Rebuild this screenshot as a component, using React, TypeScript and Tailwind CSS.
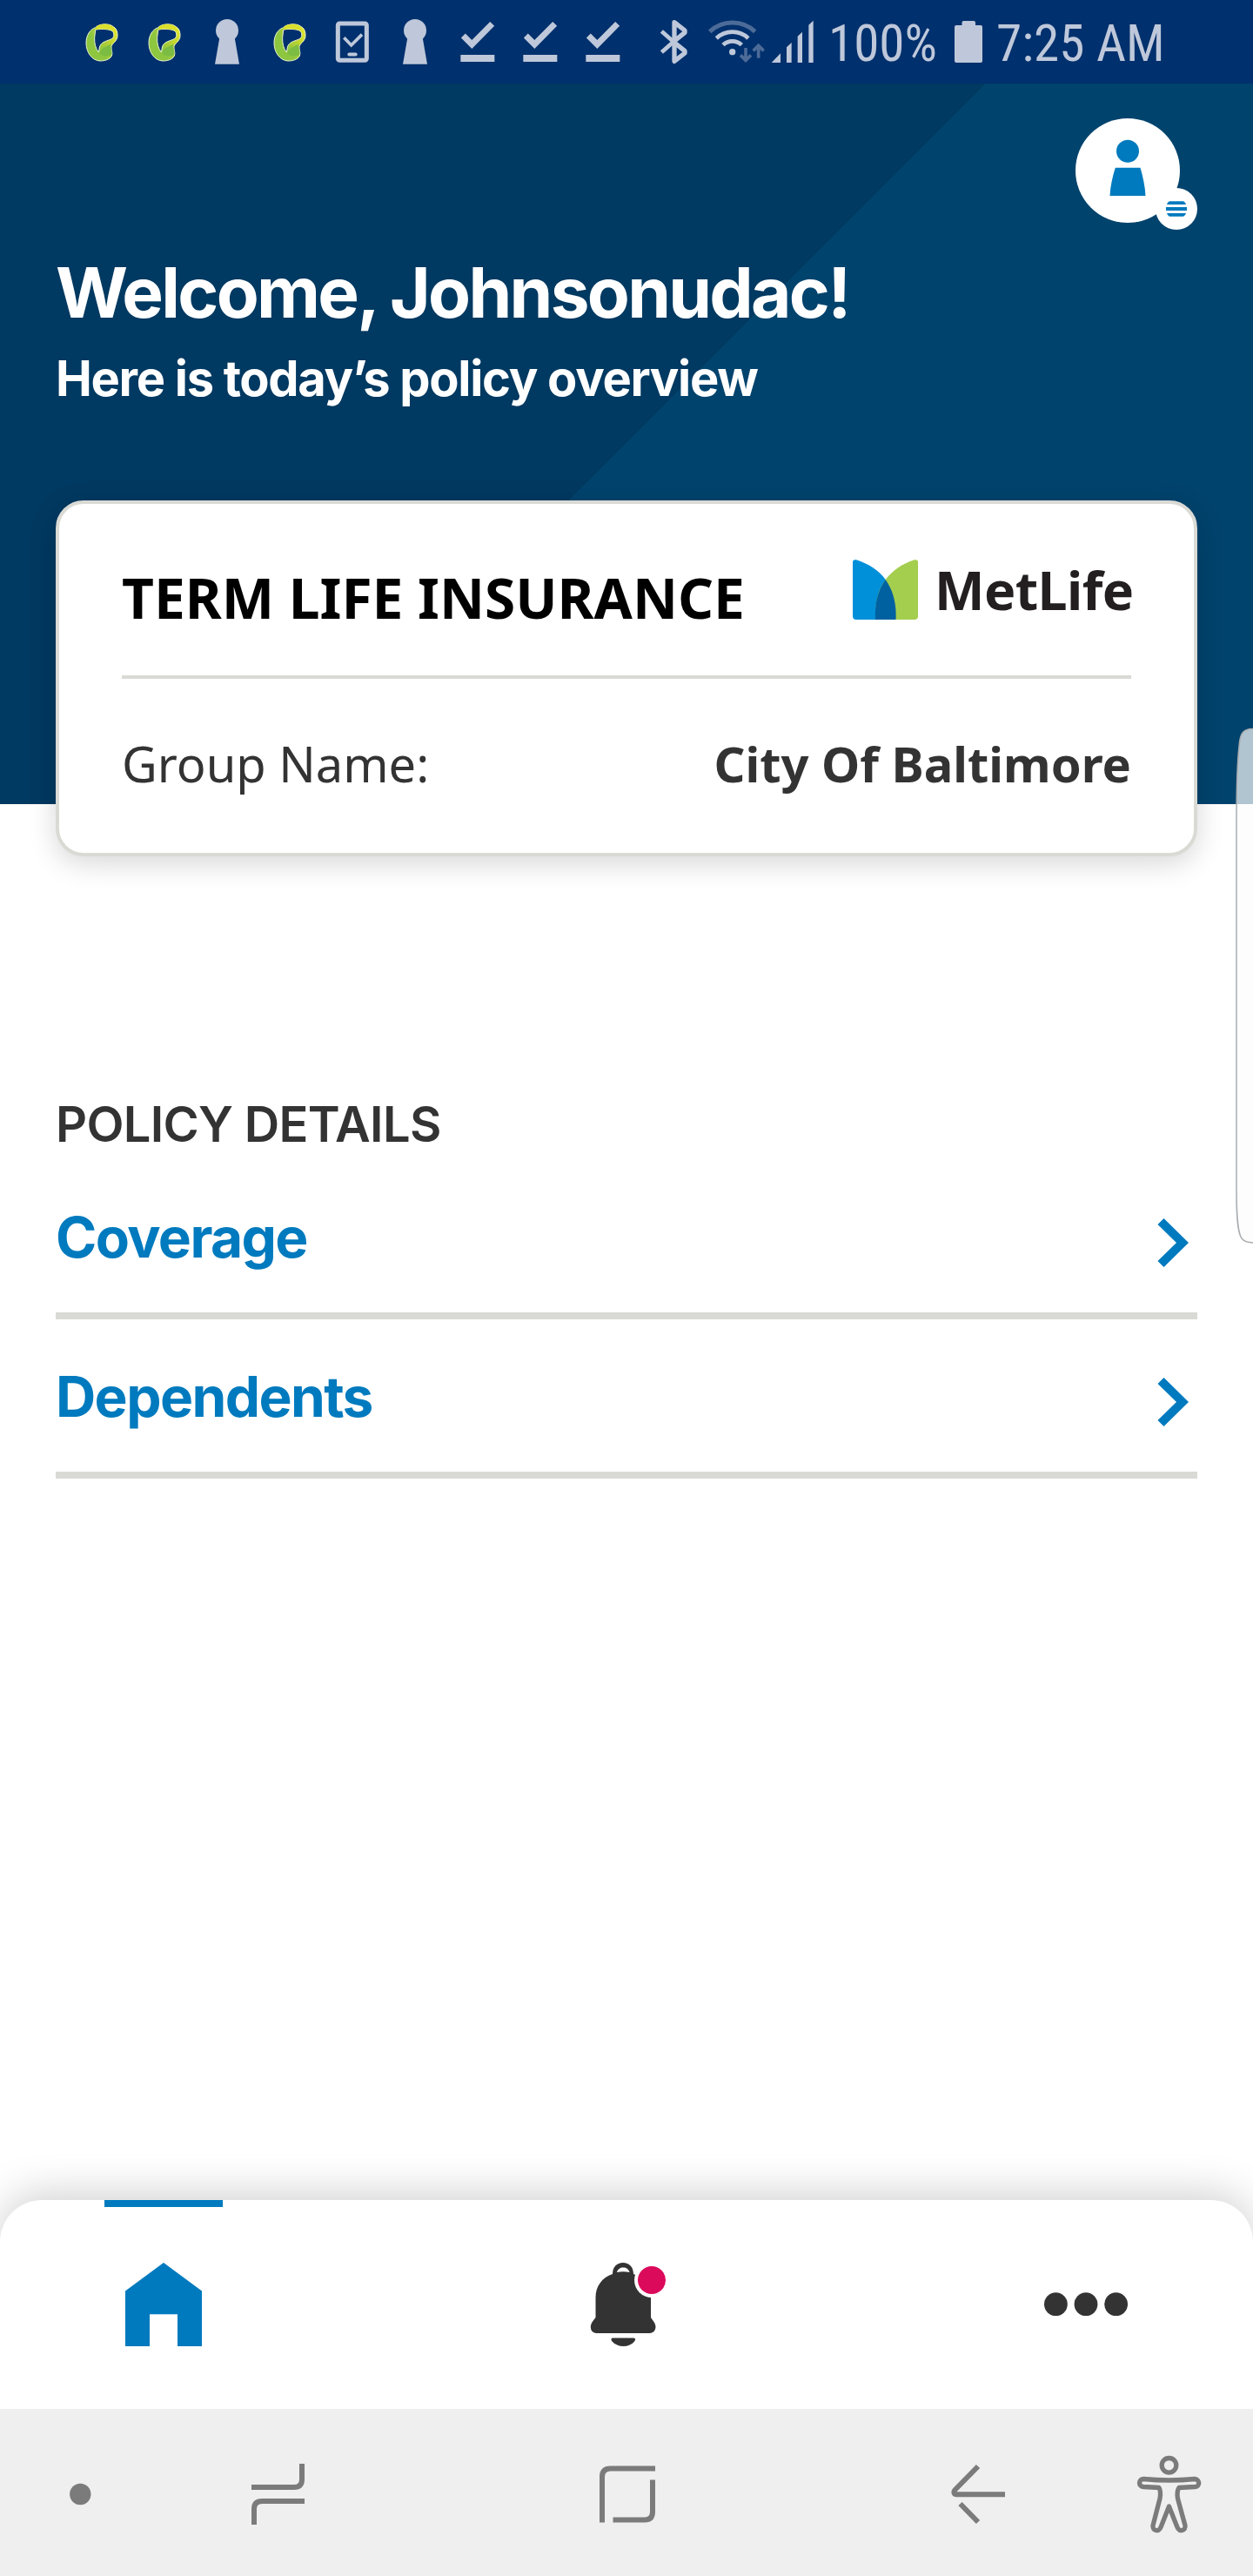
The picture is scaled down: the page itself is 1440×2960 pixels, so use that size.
import React from "react";

const SANS = "font-['Inter','Liberation_Sans',sans-serif]";
const NOTO = "font-['Noto_Sans','Open_Sans',sans-serif]";

function RibbonIcon() {
  return (
    <svg width="72" height="96" viewBox="63 0 216 288" className="shrink-0">
      <defs>
        <linearGradient id="ribbon" x1="0" y1="0.8" x2="1" y2="0.1">
          <stop offset="0" stopColor="#8cc63f" />
          <stop offset="0.35" stopColor="#8fc640" />
          <stop offset="0.7" stopColor="#c3d530" />
          <stop offset="1" stopColor="#e8ea2c" />
        </linearGradient>
      </defs>
      <path
        fillRule="evenodd"
        fill="url(#ribbon)"
        stroke="#eef7d2"
        strokeWidth="3"
        d="M149 95C160 82 196 78 212 93C222 98 226 112 225 125C224 142 206 150 204 160C202 172 210 180 205 193C198 206 180 210 165 210C138 209 117 182 117 148C117 122 130 101 149 95ZM149 103C160 99 196 99 207 107C214 113 215 128 205 134C190 141 172 144 166 156C161 164 163 172 160 180C150 168 145 150 146 130Z"
      />
      <path d="M202 152C186 160 166 166 163 184C172 196 190 196 204 190C209 178 200 168 202 152Z" fill="#7cbc42" />
      <path d="M152 92C168 80 200 80 212 96C214 102 214 106 213 108C196 98 165 98 150 103Z" fill="#d9df2b" />
    </svg>
  );
}

function KeyholeIcon() {
  return (
    <svg width="72" height="96" viewBox="495 0 216 288" className="shrink-0" fill="#bec8da">
      <circle cx="603" cy="105" r="39" />
      <path d="M577 130H629L645 221H561Z" />
    </svg>
  );
}

function TabletCheckIcon() {
  return (
    <svg width="72" height="96" viewBox="927 0 216 288" className="shrink-0" fill="none" stroke="#bec8da">
      <rect x="985" y="81" width="99" height="127" rx="6" strokeWidth="15" />
      <path d="M1006 130L1031 156L1068 119" strokeWidth="11" />
      <path d="M1024 187.500H1046" strokeWidth="12" strokeLinecap="round" />
    </svg>
  );
}

function DoneIcon() {
  return (
    <svg width="72" height="96" viewBox="-19 0 216 288" className="shrink-0">
      <path d="M39 123L69 153L139 82" fill="none" stroke="#bec8da" strokeWidth="21" />
      <rect x="30" y="189" width="117" height="24" fill="#bec8da" />
    </svg>
  );
}

function BluetoothIcon() {
  return (
    <svg width="75" height="96" viewBox="627 0 225 288" className="shrink-0" fill="none" stroke="#bec8da">
      <path d="M721 108L762 144L721 180" strokeWidth="14" />
      <path d="M765 144V77L801 105V112L762 144L801 176V183L765 211V144" strokeWidth="16" strokeLinejoin="round" />
    </svg>
  );
}

function WifiIcon() {
  return (
    <svg width="80" height="96" viewBox="852 0 240 288" className="shrink-0" fill="none" stroke="#bec8da">
      <path d="M887 109A114 114 0 0 1 1043 109" strokeWidth="15" stroke="#4d6b98" />
      <path d="M910 132A80 80 0 0 1 1020 132" strokeWidth="14" />
      <path d="M933 155A46 46 0 0 1 997 155" strokeWidth="14" />
      <circle cx="965" cy="179" r="11" fill="#bec8da" stroke="none" />
      <path d="M1011 165V208M993 190L1011 208L1029 190" strokeWidth="11" stroke="#4d6b98" />
      <path d="M1055 200V157M1037 175L1055 157L1073 175" strokeWidth="11" stroke="#4d6b98" />
    </svg>
  );
}

function SignalIcon() {
  return (
    <svg width="52" height="96" viewBox="1092 0 156 288" className="shrink-0" fill="#bec8da">
      <path d="M1100 216L1131 184V216Z" />
      <path d="M1152 216V163L1169 147V216Z" />
      <path d="M1190 216V125L1206 110V216Z" />
      <path d="M1228 216V86L1244 71V216Z" />
    </svg>
  );
}

function StatusBar() {
  return (
    <header className="flex h-24 items-center bg-[#00306d] pl-[81px] text-[60px] leading-none text-[#bec8da] font-['Roboto_Condensed','Roboto',sans-serif]">
      <RibbonIcon />
      <RibbonIcon />
      <KeyholeIcon />
      <RibbonIcon />
      <TabletCheckIcon />
      <KeyholeIcon />
      <DoneIcon />
      <DoneIcon />
      <DoneIcon />
      <BluetoothIcon />
      <WifiIcon />
      <SignalIcon />
      <div className="ml-[16px] mt-[3px] w-[128px] shrink-0">
        <span className="inline-block origin-left scale-x-[0.985] whitespace-nowrap">100%</span>
      </div>
      <svg width="32" height="48" viewBox="0 0 32 48" className="ml-[17px] shrink-0" fill="#bec8da">
        <rect x="8.500" y="0" width="15.500" height="10" rx="2" />
        <rect x="0" y="5" width="32" height="43" rx="2" />
      </svg>
      <div className="ml-[16px] mt-[3px] w-[200px] shrink-0">
        <span className="inline-block origin-left scale-x-[0.985] whitespace-nowrap">7:25 AM</span>
      </div>
    </header>
  );
}

function Avatar() {
  return (
    <svg width="140" height="128" viewBox="0 0 140 128" className="shrink-0">
      <circle cx="60" cy="60" r="60" fill="#fff" />
      <circle cx="60" cy="37.700" r="13" fill="#007abe" />
      <path d="M45.800 56.700H74.500C77.500 67 80 78 80.500 89H39.500C40 78 42.500 67 45.800 56.700Z" fill="#007abe" />
      <circle cx="116" cy="104" r="24" fill="#fff" />
      <path d="M108 95.300H124Q126.500 96.300 127 99H105Q105.500 96.300 108 95.300ZM104 102H128V106H104ZM105 109H127Q126.500 111.700 124 112.700H108Q105.500 111.700 105 109Z" fill="#007abe" />
    </svg>
  );
}

function MetLifeLogo() {
  return (
    <div className="flex items-start">
      <svg width="75" height="69" viewBox="0 0 75 69">
        <path d="M0 3Q0-0.500 4 0.300C18 5 30 12 37.700 23C44 32 50 44 49.500 69H4Q0 69 0 65Z" fill="#0090da" />
        <path d="M75 3Q75-0.500 71 0.300C57 5 46 12 37.700 23C31 32 25.500 44 26 69H71Q75 69 75 65Z" fill="#a4ce4e" />
        <path d="M37.700 23C46 35 50.500 50 49.500 69H26C25 50 29 35 37.700 23Z" fill="#0061a0" />
      </svg>
      <span className="ml-[19px] mt-[5px] w-[226px] whitespace-nowrap font-['Noto_Sans',sans-serif] text-[61px] font-bold leading-[60px] tracking-[-0.6px] text-[#231f20]">
        MetLife
      </span>
    </div>
  );
}

function PolicyCard() {
  return (
    <section
      className={`relative mx-16 mt-[93px] h-[409px] rounded-[32px] border-4 border-[#dadad5] bg-white px-[72px] shadow-[0_8px_32px_rgba(0,0,0,0.16)] ${NOTO}`}
    >
      <div className="flex h-[197px] justify-between">
        <h2 className="mt-[70px] whitespace-nowrap text-[64px] font-bold leading-[76px] text-black">TERM LIFE INSURANCE</h2>
        <div className="mt-16">
          <MetLifeLogo />
        </div>
      </div>
      <div className="h-1 bg-[#d9dad5]" />
      <div className="mt-[59px] flex justify-between text-[56px] leading-[76px] text-[#333]">
        <span>Group Name:</span>
        <span className="font-bold">City Of Baltimore</span>
      </div>
    </section>
  );
}

function PolicyRow({ label }: { label: string }) {
  return (
    <a className="flex h-[183px] justify-between border-b-8 border-[#d9dad5] text-[#007abe]">
      <span className="mt-[49px] text-[64px] font-bold leading-[80px] tracking-[-1.6px]">{label}</span>
      <svg width="36" height="56" viewBox="0 0 36 56" className="mr-[10px] mt-[67px]">
        <path d="M7.500 0L36 28L7.500 56L0.500 49L22 28L0.500 7Z" fill="currentColor" />
      </svg>
    </a>
  );
}

function HomeIcon() {
  return (
    <svg width="96" height="96" viewBox="0 0 96 96">
      <path d="M44 0L88 32.500V96H60V59.300H28V96H0V32.500Z" fill="#007abe" />
    </svg>
  );
}

function BellIcon() {
  return (
    <svg width="96" height="96" viewBox="0 0 96 96">
      <path
        fillRule="evenodd"
        fill="#333"
        d="M32 13C32 5 37 0 44 0S56 5 56 13C68 17 76 27 76 41V63C78 66.500 81.500 69 81.500 74Q81 80 75 81H13Q7 80 6.800 74C7 69 10 66.500 12.500 63V40C12.500 27 20 17 32 13ZM37 11Q44 9.300 51.500 11C50 3.500 38.500 3.500 37 11Z"
      />
      <path d="M32 86.500H56.500Q59 87 57.500 90C51 98 38 98 31 90Q29.500 87 32 86.500Z" fill="#333" />
      <circle cx="77" cy="20" r="20" fill="#fff" />
      <circle cx="77" cy="20" r="16" fill="#dc0a5b" />
    </svg>
  );
}

function MoreIcon() {
  return (
    <svg width="96" height="96" viewBox="0 0 96 96" fill="#333">
      <circle cx="13.400" cy="47.700" r="13.400" />
      <circle cx="48" cy="47.700" r="13.400" />
      <circle cx="82.600" cy="47.700" r="13.400" />
    </svg>
  );
}

function TabBar() {
  return (
    <nav className="h-[240px] rounded-t-[48px] bg-white shadow-[0_-8px_48px_rgba(0,0,0,0.18)]">
      <div className="ml-[120px] h-2 w-[136px] bg-[#007abe]" />
      <div className="mt-16 flex justify-between px-36">
        <HomeIcon />
        <BellIcon />
        <MoreIcon />
      </div>
    </nav>
  );
}

function SystemBar() {
  return (
    <footer className="relative flex h-[192px] bg-[#efefef]">
      <svg width="184" height="192" viewBox="0 0 184 192">
        <circle cx="92.300" cy="98" r="12.200" fill="#7b7b7b" />
      </svg>
      <svg width="272" height="192" viewBox="184 0 272 192" fill="none" stroke="#7b7b7b" strokeWidth="6">
        <path d="M289 90H338Q347 90 347 81V63" />
        <path d="M350 106H301Q292 106 292 115V133" />
      </svg>
      <svg width="528" height="192" viewBox="456 0 528 192" fill="none" stroke="#7b7b7b" strokeWidth="6">
        <path d="M692 130.500V78Q692 68.500 701.500 68.500H753" />
        <path d="M750 81.500V118Q750 127.500 741 127.500H704.500" />
      </svg>
      <svg width="280" height="192" viewBox="984 0 280 192" fill="none" stroke="#7b7b7b" strokeWidth="6">
        <path d="M1155 98.300H1099C1096 98 1095.500 95 1098 92.500L1124 66" />
        <path d="M1103.500 109L1124 130" />
      </svg>
      <svg width="176" height="192" viewBox="1264 0 176 192" fill="none" stroke="#7b7b7b" strokeWidth="5.300" strokeLinejoin="round">
        <circle cx="1343.500" cy="64.800" r="8.300" />
        <path d="M1314 80.500Q1344 83.500 1373 80.500C1379 81 1379.500 89 1373.500 89.500L1355 90.500Q1352 95 1353.500 103L1362 134C1363 140 1355 142 1353 136L1343.500 112L1334 136C1332 142 1324 140 1325 134L1333 103Q1334.500 95 1332 90.500L1314 89.500C1308 89 1308 81 1314 80.500Z" />
      </svg>
    </footer>
  );
}

export default function App() {
  return (
    <div className={`relative flex h-[2960px] w-[1440px] flex-col overflow-hidden bg-white ${SANS}`}>
      <StatusBar />
      <main className="flex-1">
        <div className="h-[828px] bg-[linear-gradient(135deg,#003961_0_801px,#00436d_801px)]">
          <div className="flex h-[168px] items-start justify-end pr-16 pt-10">
            <Avatar />
          </div>
          <div className="ml-16 h-[218px] text-white">
            <h1 className="pt-[24px] text-[80px] font-bold leading-[96px] tracking-[-2.7px]">Welcome, Johnsonudac!</h1>
            <p className="mt-[13px] text-[56px] font-bold leading-[76px] tracking-[-1.3px]">Here is today’s policy overview</p>
          </div>
          <PolicyCard />
        </div>
        <section className="mx-16 pt-[330px]">
          <h3 className="text-[56px] font-semibold leading-[76px] tracking-[-0.7px] text-[#333]">POLICY DETAILS</h3>
          <div className="mt-[3px]">
            <PolicyRow label="Coverage" />
            <PolicyRow label="Dependents" />
          </div>
        </section>
      </main>
      <TabBar />
      <SystemBar />
      <svg className="absolute right-0 top-[836px]" width="24" height="594" viewBox="0 0 24 594">
        <path
          d="M25 1.500C10 1 9 10 8 22C6 40 5 70 5 110V530C5 560 6 580 11 587Q15 592 25 592"
          fill="rgba(252,252,252,0.7)"
          stroke="#a9adb0"
          strokeWidth="1.500"
        />
      </svg>
    </div>
  );
}
